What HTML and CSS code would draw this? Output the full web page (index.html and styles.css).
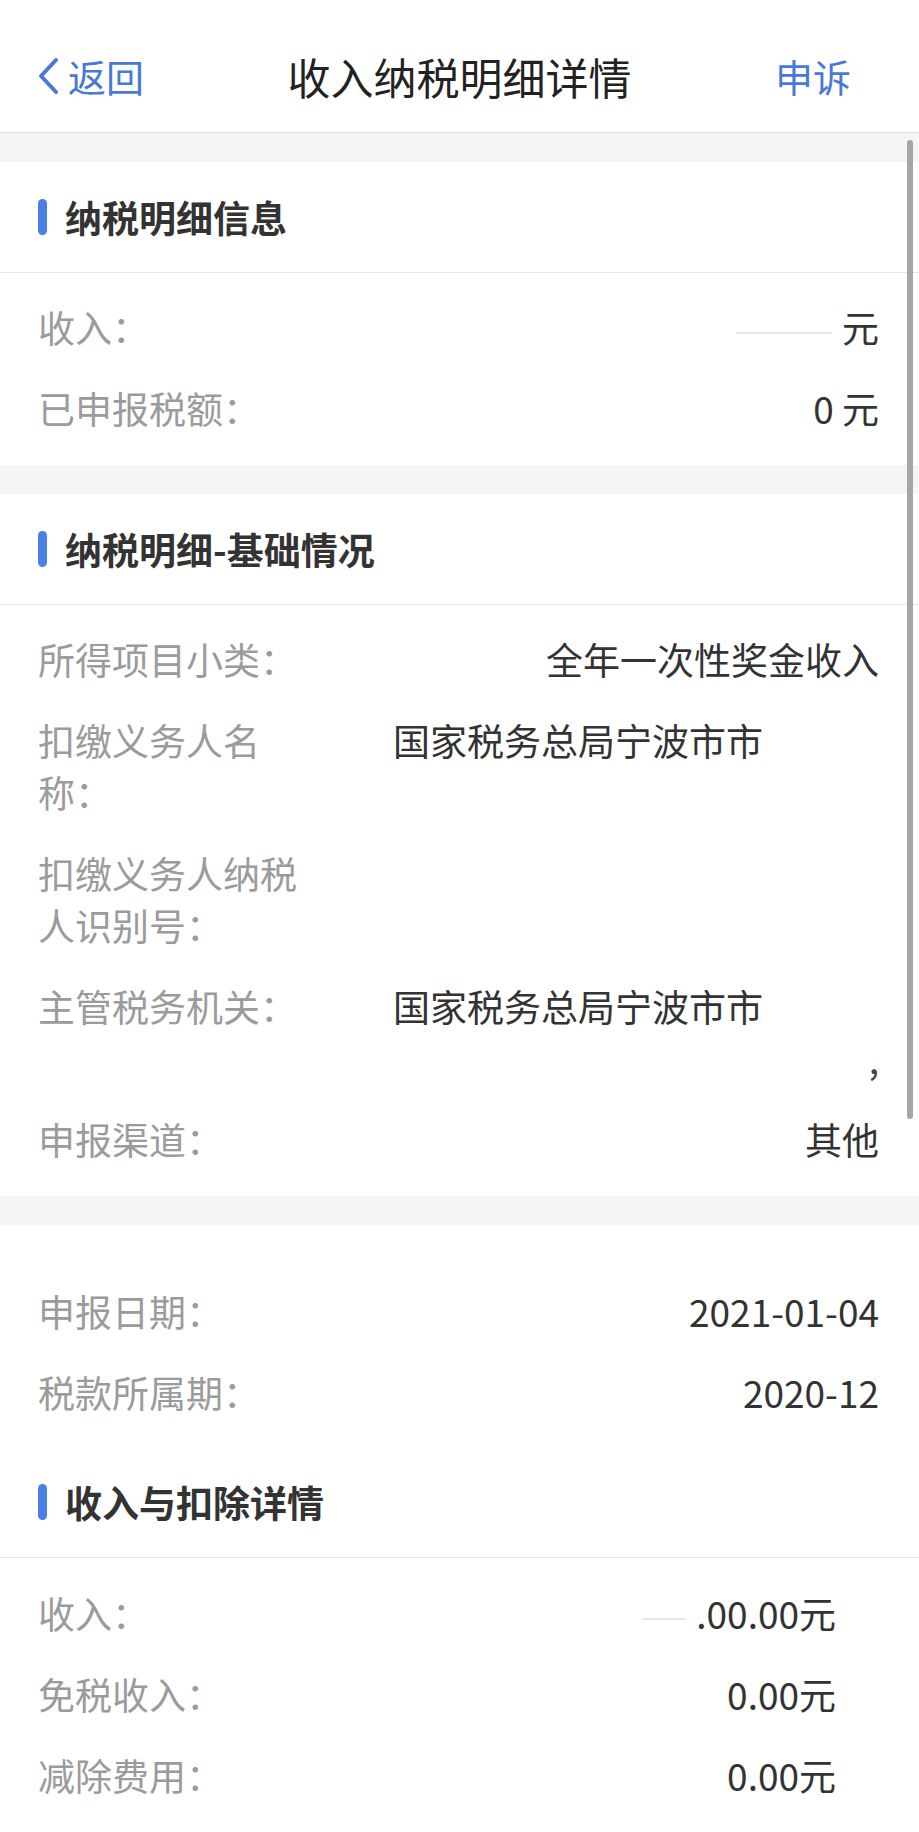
FILE: index.html
```html
<!DOCTYPE html>
<html lang="zh-CN">
<head>
  <meta charset="UTF-8">
  <meta name="viewport" content="width=device-width, initial-scale=1.0">
  <title>收入纳税明细详情</title>
  <link rel="stylesheet" href="styles.css">
</head>
<body>
<div class="page">

  <header class="navbar">
    <a class="nav-back" href="#">
      <svg viewBox="0 0 24 38" aria-hidden="true">
        <path d="M20 3 L5 19 L20 35" fill="none" stroke="currentColor" stroke-width="4" stroke-linecap="round" stroke-linejoin="round"/>
      </svg>
      返回
    </a>
    <h1 class="nav-title">收入纳税明细详情</h1>
    <a class="nav-action" href="#">申诉</a>
  </header>

  <div class="gap"></div>

  <section class="card">
    <div class="card-head"><span class="mark"></span>纳税明细信息</div>
    <ul class="rows">
      <li class="row"><span class="label">收入：</span><span class="value"><span class="smudge"></span>元</span></li>
      <li class="row"><span class="label">已申报税额：</span><span class="value">0 元</span></li>
    </ul>
  </section>

  <div class="gap"></div>

  <section class="card">
    <div class="card-head"><span class="mark"></span>纳税明细-基础情况</div>
    <ul class="rows">
      <li class="row"><span class="label">所得项目小类：</span><span class="value">全年一次性奖金收入</span></li>
      <li class="row"><span class="label">扣缴义务人名称：</span><span class="value value-left">国家税务总局宁波市市</span></li>
      <li class="row"><span class="label">扣缴义务人纳税人识别号：</span><span class="value"></span></li>
      <li class="row"><span class="label">主管税务机关：</span><span class="value value-left">国家税务总局宁波市市<span class="tick">,</span></span></li>
      <li class="row"><span class="label">申报渠道：</span><span class="value">其他</span></li>
    </ul>
  </section>

  <div class="gap"></div>

  <section class="card">
    <ul class="rows rows-loose">
      <li class="row"><span class="label">申报日期：</span><span class="value">2021-01-04</span></li>
      <li class="row"><span class="label">税款所属期：</span><span class="value">2020-12</span></li>
    </ul>
    <div class="card-head"><span class="mark"></span>收入与扣除详情</div>
    <ul class="rows rows-inset">
      <li class="row"><span class="label">收入：</span><span class="value"><span class="smudge smudge-short"></span>.00.00元</span></li>
      <li class="row"><span class="label">免税收入：</span><span class="value">0.00元</span></li>
      <li class="row"><span class="label">减除费用：</span><span class="value">0.00元</span></li>
    </ul>
  </section>

  <div class="scrollbar"></div>
</div>
</body>
</html>
```

FILE: styles.css
```css
* {
  box-sizing: border-box;
}
body {
  margin: 0;
  font-family: "Noto Sans CJK SC", "Noto Sans", sans-serif;
  color: #333;
  background: #fff;
}
.page {
  position: relative;
  width: 919px;
  height: 1832px;
  overflow: hidden;
}

/* top bar */
.navbar {
  display: grid;
  grid-template-columns: 1fr auto 1fr;
  align-items: center;
  height: 133px;
  padding: 20px 36px 0;
  border-bottom: 1px solid #dedede;
}
.nav-back {
  display: flex;
  align-items: center;
  gap: 8px;
  color: #4a78d6;
  font-size: 38px;
  line-height: 1;
  text-decoration: none;
}
.nav-back svg {
  width: 24px;
  height: 38px;
}
.nav-title {
  margin: 0;
  font-size: 43px;
  font-weight: 400;
  line-height: 1;
  color: #222;
}
.nav-action {
  justify-self: end;
  margin-right: 32px;
  color: #4a78d6;
  font-size: 38px;
  line-height: 1;
  text-decoration: none;
}

.gap {
  height: 29px;
  background: #f4f5f7;
}

/* cards */
.card-head {
  display: flex;
  align-items: center;
  gap: 18px;
  height: 111px;
  padding-left: 38px;
  border-bottom: 1px solid #e6e6e6;
  font-size: 37px;
  font-weight: 700;
  line-height: 1;
  color: #333;
}
.mark {
  width: 9px;
  height: 36px;
  border-radius: 5px;
  background: #4a7fe8;
}
.rows {
  list-style: none;
  margin: 0;
  padding: 13.5px 0 16.5px;
}
.rows-loose {
  padding: 45.5px 0 14.5px;
}
.rows-inset {
  padding-top: 14.5px;
}
.row {
  display: flex;
  align-items: flex-start;
  padding: 14.5px 40px 14.5px 38px;
  font-size: 37px;
  line-height: 52px;
}
.rows-inset .row {
  padding-right: 83px;
}
.label {
  flex: 0 0 272px;
  color: #9b9b9b;
}
.value {
  flex: 1;
  margin-left: 83px;
  text-align: right;
  color: #333;
}
.value-left {
  text-align: left;
}
.tick {
  display: block;
  text-align: right;
  color: #444;
}
.smudge {
  display: inline-block;
  width: 96px;
  height: 2px;
  margin-right: 10px;
  vertical-align: middle;
  background: #e8e8e8;
}
.smudge-short {
  width: 44px;
}

.scrollbar {
  position: absolute;
  top: 140px;
  right: 6px;
  width: 6px;
  height: 979px;
  border-radius: 3px;
  background: #a6a6a6;
}
```
